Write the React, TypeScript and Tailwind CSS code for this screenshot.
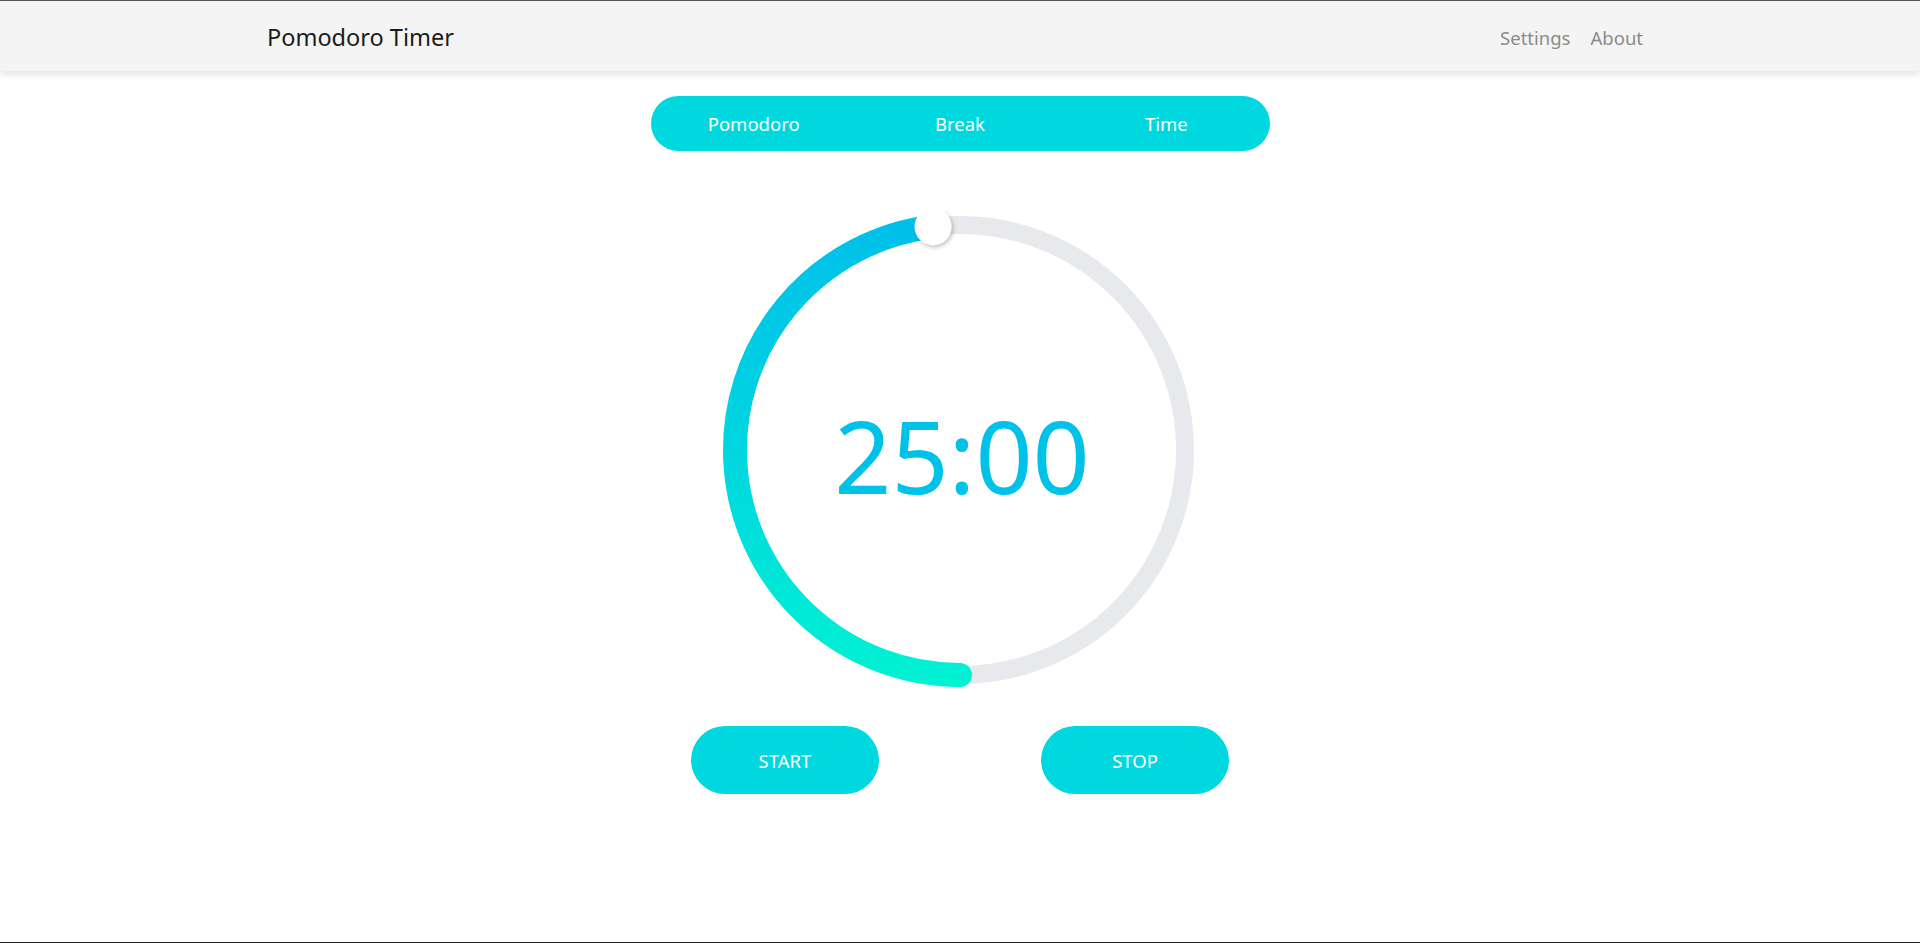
import { useState } from "react";

const MODES = ["Pomodoro", "Break", "Time"];

/* ── Ring geometry ── */
const SIZE = 480;
const C = SIZE / 2;
const R = 225;
const PROGRESS_END_DEG = -6.9; // degrees from 12 o'clock
const endX = C + R * Math.sin((PROGRESS_END_DEG * Math.PI) / 180);
const endY = C - R * Math.cos((PROGRESS_END_DEG * Math.PI) / 180);

function Ring() {
  return (
    <svg width={SIZE} height={SIZE} viewBox={`0 0 ${SIZE} ${SIZE}`} className="block">
      <defs>
        <linearGradient id="ringGrad" gradientUnits="userSpaceOnUse" x1="0" y1={C - R} x2="0" y2={C + R}>
          <stop offset="0" stopColor="#00c0ea" />
          <stop offset="0.5" stopColor="#00d6df" />
          <stop offset="1" stopColor="#00f1d3" />
        </linearGradient>
        <filter id="knobShadow" x="-50%" y="-50%" width="200%" height="200%">
          <feDropShadow dx="1.5" dy="2" stdDeviation="2" floodColor="#000" floodOpacity="0.25" />
        </filter>
      </defs>
      <circle cx={C} cy={C} r={R} fill="none" stroke="#e8e9ed" strokeWidth={18} />
      <path
        d={`M ${C} ${C + R} A ${R} ${R} 0 0 1 ${endX} ${endY}`}
        fill="none"
        stroke="url(#ringGrad)"
        strokeWidth={24}
        strokeLinecap="round"
      />
      <circle cx={endX} cy={endY} r={18.5} fill="#fff" filter="url(#knobShadow)" />
    </svg>
  );
}

export default function App() {
  const [mode, setMode] = useState(0);

  return (
    <div
      className="h-[943px] flex flex-col bg-white border-t border-[#555555] border-b border-b-[#1e1e1e] overflow-hidden"
      style={{ fontFamily: '"Noto Sans", "Open Sans", sans-serif' }}
    >
      {/* Header */}
      <header className="h-[70px] shrink-0 bg-[#f4f4f4] shadow-[0_3px_8px_rgba(0,0,0,0.12)] relative z-10">
        <div className="max-w-[1386px] mx-auto h-full flex items-center justify-between pt-[4px]">
          <h1 className="text-[23.5px] text-[#1b1b1b]">Pomodoro Timer</h1>
          <nav className="flex items-center gap-[20px] pr-[10px] text-[18.5px] text-[#8b8b8b]">
            <a href="#">Settings</a>
            <a href="#">About</a>
          </nav>
        </div>
      </header>

      {/* Mode tabs */}
      <div className="mt-[25px] mx-auto w-[619px] h-[55px] rounded-full bg-[#00d8df] grid grid-cols-3 items-center">
        {MODES.map((m, i) => (
          <button
            key={m}
            onClick={() => setMode(i)}
            className={`h-full text-[18.5px] text-white ${mode === i ? "" : ""}`}
          >
            {m}
          </button>
        ))}
      </div>

      {/* Timer ring */}
      <div className="relative mx-auto mt-[59px] w-[480px] h-[480px]">
        <Ring />
        <div className="absolute inset-0 flex items-center justify-center">
          <span className="text-[100px] leading-none text-[#00c2e9] mt-[10px] ml-[4px]">25:00</span>
        </div>
      </div>

      {/* Controls */}
      <div className="mt-[36px] flex justify-center gap-[162px]">
        <button className="w-[188px] h-[68px] pt-[2px] rounded-full bg-[#00d8df] text-white text-[18.5px]">START</button>
        <button className="w-[188px] h-[68px] pt-[2px] rounded-full bg-[#00d8df] text-white text-[18.5px]">STOP</button>
      </div>
    </div>
  );
}
